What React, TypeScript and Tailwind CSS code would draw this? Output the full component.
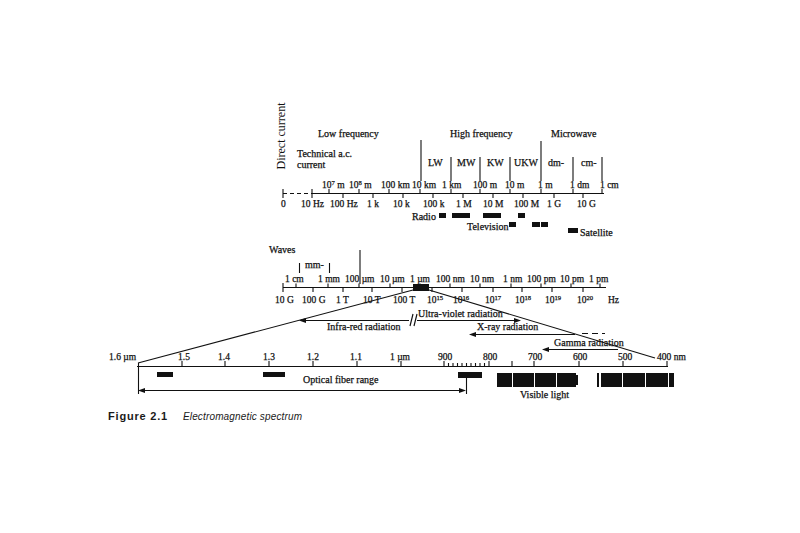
import React from "react";

const INK = "#111111";
const SERIF = "'Liberation Serif', 'Times New Roman', serif";

type Lab = [number, string, string?, string?];

function Label({ x, y, l, size = 9.5 }: { x: number; y: number; l: Lab; size?: number }) {
  const [, a, sup, rest] = l;
  return (
    <text x={x} y={y} fontSize={size} fontFamily={SERIF} fill={INK} stroke={INK} strokeWidth={0.25}>
      {a}
      {sup !== undefined && (
        <tspan dy={-3.5} fontSize={size * 0.7}>
          {sup}
        </tspan>
      )}
      {rest !== undefined && <tspan dy={3.5}>{rest}</tspan>}
    </text>
  );
}

function ArrowL({ x, y }: { x: number; y: number }) {
  return <polygon points={`${x},${y} ${x + 7},${y - 2.5} ${x + 7},${y + 2.5}`} fill={INK} />;
}
function ArrowR({ x, y }: { x: number; y: number }) {
  return <polygon points={`${x},${y} ${x - 7},${y - 2.5} ${x - 7},${y + 2.5}`} fill={INK} />;
}

const topWave: Lab[] = [
  [322, "10", "7", " m"],
  [349, "10", "8", " m"],
  [381, "100 km"],
  [412, "10 km"],
  [442, "1 km"],
  [473, "100 m"],
  [505, "10 m"],
  [538, "1 m"],
  [570, "1 dm"],
  [600, "1 cm"],
];
const topFreq: Lab[] = [
  [281, "0"],
  [301, "10 Hz"],
  [330, "100 Hz"],
  [367, "1 k"],
  [393, "10 k"],
  [423, "100 k"],
  [456, "1 M"],
  [483, "10 M"],
  [514, "100 M"],
  [547, "1 G"],
  [577, "10 G"],
];
const midWave: Lab[] = [
  [285, "1 cm"],
  [318, "1 mm"],
  [345, "100 µm"],
  [380, "10 µm"],
  [410, "1 µm"],
  [436, "100 nm"],
  [470, "10 nm"],
  [503, "1 nm"],
  [527, "100 pm"],
  [560, "10 pm"],
  [589, "1 pm"],
];
const midFreq: Lab[] = [
  [275, "10 G"],
  [302, "100 G"],
  [336, "1 T"],
  [363, "10 T"],
  [393, "100 T"],
  [427, "10", "15"],
  [453, "10", "16"],
  [485, "10", "17"],
  [515, "10", "18"],
  [545, "10", "19"],
  [577, "10", "20"],
  [608, "Hz"],
];
const lowLabels: Lab[] = [
  [109, "1.6 µm"],
  [178, "1.5"],
  [218, "1.4"],
  [263, "1.3"],
  [307, "1.2"],
  [350, "1.1"],
  [390, "1 µm"],
  [438, "900"],
  [483, "800"],
  [528, "700"],
  [573, "600"],
  [618, "500"],
  [657, "400 nm"],
];

const topUp = [329, 359, 389, 420, 451, 480, 510, 541, 573, 602];
const topDown = [343, 373, 403, 433, 463, 493, 523, 554, 583];
const midUp = [296, 328, 359, 390, 420, 450, 480, 511, 541, 571, 600];
const midDown = [313, 343, 372, 402, 432, 462, 493, 522, 552, 583];
const lowUp = [182, 225, 269, 313, 357, 401, 444, 489, 512, 534, 579, 623, 667];
const minor = [448.5, 453, 457.5, 462, 466.5, 471, 475.5, 480, 484.5];

function Spectrum() {
  return (
    <svg width={800} height={405} viewBox="0 0 800 405" className="block">
      <g stroke={INK} strokeWidth={1.1} fill="none">
        {/* top region separators */}
        <line x1={421} y1={140} x2={421} y2={181} />
        <line x1={451} y1={157} x2={451} y2={181} />
        <line x1={480} y1={157} x2={480} y2={181} />
        <line x1={510} y1={157} x2={510} y2={181} />
        <line x1={541} y1={141} x2={541} y2={181} />
        <line x1={573} y1={157} x2={573} y2={181} />
        <line x1={602} y1={157} x2={602} y2={181} />

        {/* top axis */}
        <line x1={283} y1={193.5} x2={311} y2={193.5} strokeDasharray="4 3" />
        <line x1={311} y1={193.5} x2={604} y2={193.5} />
        <line x1={283} y1={189} x2={283} y2={198} />
        <line x1={312} y1={189} x2={312} y2={198} />
        {topUp.map((x) => (
          <line key={"tu" + x} x1={x} y1={189} x2={x} y2={193.5} />
        ))}
        {topDown.map((x) => (
          <line key={"td" + x} x1={x} y1={193.5} x2={x} y2={198} />
        ))}

        {/* waves region */}
        <line x1={360} y1={250} x2={360} y2={284} />
        <line x1={299.5} y1={263} x2={299.5} y2={273} />
        <line x1={329.5} y1={263} x2={329.5} y2={273} />

        {/* middle axis */}
        <line x1={283} y1={287.5} x2={606} y2={287.5} />
        <line x1={283} y1={283} x2={283} y2={292} />
        {midUp.map((x) => (
          <line key={"mu" + x} x1={x} y1={283.5} x2={x} y2={287.5} />
        ))}
        {midDown.map((x) => (
          <line key={"md" + x} x1={x} y1={287.5} x2={x} y2={292} />
        ))}

        {/* diagonals */}
        <line x1={413} y1={290} x2={138} y2={363} />
        <line x1={429} y1={290} x2={655} y2={358} />

        {/* radiation arrows */}
        <line x1={306} y1={320.5} x2={409} y2={320.5} />
        <line x1={410} y1={326} x2={413} y2={314} />
        <line x1={414} y1={326} x2={417} y2={314} />
        <line x1={417} y1={320.5} x2={514} y2={320.5} />
        <line x1={476} y1={334.5} x2={575} y2={334.5} />
        <line x1={582} y1={333.5} x2={605} y2={333.5} strokeDasharray="6 4" />
        <line x1={549} y1={349.5} x2={618} y2={349.5} />

        {/* lower axis */}
        <line x1={137} y1={366.5} x2={668} y2={366.5} />
        {lowUp.map((x) => (
          <line key={"lu" + x} x1={x} y1={361} x2={x} y2={366.5} />
        ))}
        {minor.map((x) => (
          <line key={"mi" + x} x1={x} y1={363} x2={x} y2={366.5} />
        ))}

        {/* optical fiber range */}
        <line x1={138.5} y1={363} x2={138.5} y2={394} />
        <line x1={466.5} y1={377} x2={466.5} y2={394} />
        <line x1={144} y1={390.5} x2={460} y2={390.5} />
      </g>

      <g fill={INK}>
        {/* arrowheads */}
        <ArrowL x={299} y={320.5} />
        <ArrowR x={521} y={320.5} />
        <ArrowL x={469} y={334.5} />
        <ArrowL x={542} y={349.5} />
        <ArrowL x={138} y={390.5} />
        <ArrowR x={466} y={390.5} />

        {/* radio / tv / satellite bars */}
        <rect x={439} y={213} width={7} height={5} />
        <rect x={452} y={213} width={18} height={5} />
        <rect x={483} y={213} width={18} height={5} />
        <rect x={518} y={213} width={7} height={5} />
        <rect x={509} y={222} width={7} height={5} />
        <rect x={532} y={222} width={8} height={5} />
        <rect x={541} y={222} width={7} height={5} />
        <rect x={568} y={228} width={10} height={5} />

        {/* 1 µm bar on middle axis */}
        <rect x={413} y={284} width={16} height={7} />

        {/* lower bars */}
        <rect x={157} y={372} width={16} height={5} />
        <rect x={263} y={372} width={22} height={5} />
        <rect x={458} y={372} width={24} height={6} />

        {/* visible light blocks */}
        <rect x={497} y={373} width={15} height={14} />
        <rect x={513} y={373} width={21} height={14} />
        <rect x={535} y={373} width={21} height={14} />
        <rect x={557} y={373} width={19} height={14} />
        <rect x={576} y={375} width={2} height={10} />
        <rect x={597} y={373} width={2} height={14} />
        <rect x={601} y={373} width={21} height={14} />
        <rect x={623} y={373} width={22} height={14} />
        <rect x={646} y={373} width={22} height={14} />
        <rect x={669} y={373} width={5} height={14} />
      </g>

      {/* headings */}
      <text
        x={285}
        y={136}
        transform="rotate(-90 285 136)"
        textAnchor="middle"
        fontSize={12}
        fontFamily={SERIF}
        fill={INK}
      >
        Direct current
      </text>
      <g fontFamily={SERIF} fill={INK} stroke={INK} strokeWidth={0.25} fontSize={10}>
        <text x={318} y={137}>Low frequency</text>
        <text x={297} y={157}>Technical a.c.</text>
        <text x={297} y={168}>current</text>
        <text x={450} y={137}>High frequency</text>
        <text x={551} y={137}>Microwave</text>
        <text x={428} y={166}>LW</text>
        <text x={457} y={166}>MW</text>
        <text x={487} y={166}>KW</text>
        <text x={514} y={166}>UKW</text>
        <text x={548} y={166}>dm-</text>
        <text x={581} y={166}>cm-</text>
        <text x={412} y={220}>Radio</text>
        <text x={467} y={230}>Television</text>
        <text x={580} y={236}>Satellite</text>
        <text x={269} y={253}>Waves</text>
        <text x={305} y={268}>mm-</text>
        <text x={418} y={317}>Ultra-violet radiation</text>
        <text x={327} y={330}>Infra-red radiation</text>
        <text x={477} y={330}>X-ray radiation</text>
        <text x={554} y={346}>Gamma radiation</text>
        <text x={303} y={383}>Optical fiber range</text>
        <text x={520} y={398}>Visible light</text>
      </g>

      {topWave.map((l) => (
        <Label key={"tw" + l[0]} x={l[0]} y={188} l={l} />
      ))}
      {topFreq.map((l) => (
        <Label key={"tf" + l[0]} x={l[0]} y={207} l={l} />
      ))}
      {midWave.map((l) => (
        <Label key={"mw" + l[0]} x={l[0]} y={282} l={l} />
      ))}
      {midFreq.map((l) => (
        <Label key={"mf" + l[0]} x={l[0]} y={303} l={l} />
      ))}
      {lowLabels.map((l) => (
        <Label key={"ll" + l[0]} x={l[0]} y={360} l={l} />
      ))}
    </svg>
  );
}

export default function App() {
  return (
    <div className="w-[800px] h-[533px] bg-white overflow-hidden">
      <Spectrum />
      <div
        className="flex items-baseline pl-[108px] pt-[4px] text-[#1a1a1a] leading-[14px]"
        style={{ fontFamily: "'Liberation Sans', Arial, sans-serif" }}
      >
        <span className="font-bold text-[11px] tracking-[0.8px]">Figure 2.1</span>
        <span className="italic text-[10px] ml-[15px] tracking-[0.15px]">Electromagnetic spectrum</span>
      </div>
    </div>
  );
}
